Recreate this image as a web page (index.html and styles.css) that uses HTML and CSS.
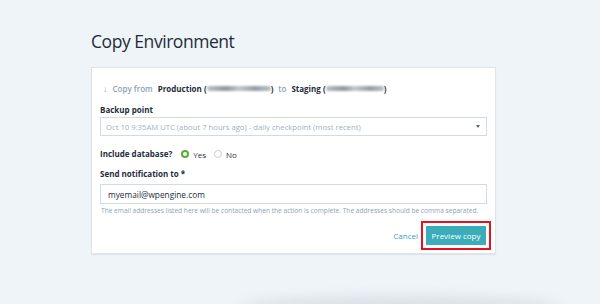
FILE: index.html
```html
<!DOCTYPE html>
<html>
<head>
<meta charset="utf-8">
<link rel="stylesheet" href="styles.css">
</head>
<body>
<div class="page">
  <h1 class="title">Copy Environment</h1>
  <div class="card">
    <div class="copy-row">
      <span class="arrow">&#8595;</span>
      <span class="muted">Copy from</span>
      <span class="strong">Production (<span class="blur w1"></span>)</span>
      <span class="muted">to</span>
      <span class="strong">Staging (<span class="blur w2"></span>)</span>
    </div>
    <div class="label">Backup point</div>
    <div class="select">
      <span>Oct 10 9:35AM UTC (about 7 hours ago) - daily checkpoint (most recent)</span>
      <span class="caret"></span>
    </div>
    <div class="db-row">
      <span class="label inline">Include database?</span>
      <span class="radio on"></span><span class="opt">Yes</span>
      <span class="radio"></span><span class="opt">No</span>
    </div>
    <div class="label">Send notification to *</div>
    <div class="input">myemail@wpengine.com</div>
    <div class="help">The email addresses listed here will be contacted when the action is complete. The addresses should be comma separated.</div>
    <div class="actions">
      <span class="cancel">Cancel</span>
      <span class="highlight"><span class="btn">Preview copy</span></span>
    </div>
  </div>
  <div class="shadow"></div>
</div>
</body>
</html>
```
FILE: styles.css
```css
* { box-sizing: border-box; }
html, body { margin: 0; height: 100%; }
body {
  background: #eff4f8;
  font-family: "Open Sans", "Noto Sans", sans-serif;
  color: #1f2d3a;
  overflow: hidden;
}
.page { position: relative; height: 304px; padding: 28px 0 0 91px; }
.title {
  margin: 0;
  font-size: 17.5px;
  letter-spacing: -0.45px;
  font-weight: 400;
  line-height: 26px;
  color: #1f2d3a;
  height: 39px;
}
.card {
  width: 405px;
  height: 187px;
  background: #fff;
  border: 1px solid #dfe4e8;
  box-shadow: 0 1px 1px rgba(0,0,0,0.06);
  padding: 14px 8px 0 8px;
}
.copy-row {
  display: flex;
  align-items: center;
  height: 12px;
  font-size: 8px;
  padding-left: 3px;
}
.arrow { color: #8aa0b5; font-size: 9px; margin-right: 5px; }
.muted { color: #8aa0b5; font-weight: 600; margin-right: 5px; }
.strong { font-weight: 700; color: #1f2d3a; margin-right: 5px; display: inline-flex; align-items: center; }
.blur {
  display: inline-block;
  height: 5px;
  background: linear-gradient(90deg, #b9c0c7, #8f979f 30%, #c2c8cd 50%, #959ca3 75%, #b9c0c7);
  filter: blur(0.8px);
  border-radius: 2px;
}
.w1 { width: 64px; }
.w2 { width: 58px; }
.label {
  font-size: 8px;
  font-weight: 700;
  color: #1f2d3a;
  margin-top: 10px;
  height: 12px;
  line-height: 12px;
}
.select {
  margin-top: 1px;
  height: 19px;
  border: 1px solid #d3dae0;
  display: flex;
  align-items: center;
  justify-content: space-between;
  padding: 0 6px 0 5px;
  font-size: 7.7px;
  color: #9fb2c4;
}
.caret {
  width: 0; height: 0;
  border-left: 2px solid transparent;
  border-right: 2px solid transparent;
  border-top: 3px solid #5a6670;
}
.db-row {
  display: flex;
  align-items: center;
  margin-top: 12px;
  height: 12px;
}
.label.inline { margin-top: 0; margin-right: 9px; }
.radio {
  width: 8px; height: 8px;
  border-radius: 50%;
  border: 1px solid #c8d0d7;
  background: #fff;
  margin-right: 4px;
}
.radio.on { border: 2.5px solid #5aaa3c; background: #fff; }
.opt { font-size: 8px; color: #1f2d3a; margin-right: 8px; }
.db-row + .label { margin-top: 8px; }
.input {
  margin-top: 4px;
  height: 20px;
  border: 1px solid #d3dae0;
  display: flex;
  align-items: center;
  padding-left: 7px;
  font-size: 8.3px;
  color: #1f2d3a;
}
.help {
  margin-top: 2px;
  font-size: 6.6px;
  color: #8ca3b8;
  line-height: 10px;
  padding-left: 1px;
  white-space: nowrap;
}
.actions {
  display: flex;
  justify-content: flex-end;
  align-items: center;
  margin-top: 5px;
  margin-right: -4px;
}
.cancel { font-size: 8px; color: #3ba3b5; margin-right: 3px; }
.highlight {
  border: 2px solid #e3121c;
  padding: 2px;
  display: inline-flex;
}
.btn {
  background: #3badba;
  color: #fff;
  font-size: 8px;
  width: 62px;
  height: 21px;
  display: flex;
  align-items: center;
  justify-content: center;
  border: 1px solid #fff;
}
.shadow {
  position: absolute;
  left: 240px;
  right: 40px;
  top: 296px;
  height: 20px;
  border-radius: 50%;
  background: rgba(160,170,180,0.25);
  filter: blur(6px);
}
```
